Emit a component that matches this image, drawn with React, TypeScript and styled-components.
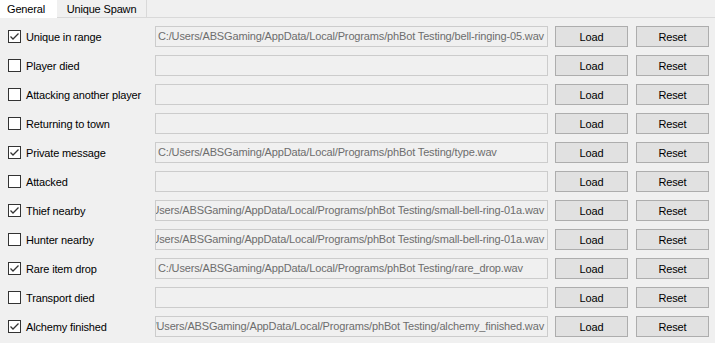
import React from 'react';
import styled, { createGlobalStyle } from 'styled-components';

const GlobalStyle = createGlobalStyle`
  html, body {
    margin: 0;
    padding: 0;
    background: #f0f0f0;
  }
  body {
    font-family: 'Liberation Sans', Arial, sans-serif;
    font-size: 11px;
    letter-spacing: -0.15px;
    color: #000;
  }
`;

const Window = styled.div`
  width: 715px;
  height: 343px;
  background: #f0f0f0;
  overflow: hidden;
`;

const TabBar = styled.div`
  display: flex;
  height: 17px;
  border-bottom: 1px solid #d9d9d9;
`;

const Tab = styled.div<{ $active?: boolean }>`
  display: flex;
  align-items: center;
  box-sizing: border-box;
  justify-content: ${(p) => (p.$active ? 'flex-start' : 'center')};
  width: ${(p) => (p.$active ? '57px' : '90px')};
  padding-left: ${(p) => (p.$active ? '7px' : '0')};
  background: ${(p) => (p.$active ? '#ffffff' : '#f0f0f0')};
  border-right: ${(p) => (p.$active ? 'none' : '1px solid #d9d9d9')};
  height: ${(p) => (p.$active ? '18px' : '17px')};
  margin-bottom: ${(p) => (p.$active ? '-1px' : '0')};
`;

const Panel = styled.div`
  display: grid;
  grid-template-columns: 147px 400px 81px 73px;
  row-gap: 8px;
  padding: 8px 6px 0 8px;
`;

const Row = styled.div`
  display: contents;
`;

const CheckLabel = styled.label`
  display: flex;
  align-items: center;
  gap: 5px;
  height: 21px;
  white-space: nowrap;
`;

const Box = styled.span`
  display: inline-flex;
  align-items: center;
  justify-content: center;
  width: 11px;
  height: 11px;
  border: 1px solid #333333;
  background: #ffffff;
  flex-shrink: 0;
`;

const PathField = styled.div`
  display: flex;
  justify-content: flex-end;
  height: 19px;
  border: 1px solid #cccccc;
  background: #f0f0f0;
  overflow: hidden;
  margin-right: 7px;
`;

const PathText = styled.span`
  flex: 0 0 auto;
  min-width: 100%;
  box-sizing: border-box;
  padding: 0 3px 0 2px;
  line-height: 19px;
  color: #6d6d6d;
  white-space: nowrap;
`;

const Button = styled.button`
  height: 21px;
  width: 73px;
  border: 1px solid #adadad;
  background: #e1e1e1;
  color: #000;
  font: inherit;
  letter-spacing: inherit;
  padding: 0;
`;

type Alert = { label: string; checked: boolean; path: string };

const base = 'C:/Users/ABSGaming/AppData/Local/Programs/phBot Testing/';

const alerts: Alert[] = [
  { label: 'Unique in range', checked: true, path: base + 'bell-ringing-05.wav' },
  { label: 'Player died', checked: false, path: '' },
  { label: 'Attacking another player', checked: false, path: '' },
  { label: 'Returning to town', checked: false, path: '' },
  { label: 'Private message', checked: true, path: base + 'type.wav' },
  { label: 'Attacked', checked: false, path: '' },
  { label: 'Thief nearby', checked: true, path: base + 'small-bell-ring-01a.wav' },
  { label: 'Hunter nearby', checked: false, path: base + 'small-bell-ring-01a.wav' },
  { label: 'Rare item drop', checked: true, path: base + 'rare_drop.wav' },
  { label: 'Transport died', checked: false, path: '' },
  { label: 'Alchemy finished', checked: true, path: base + 'alchemy_finished.wav' },
];

const Check: React.FC<{ checked: boolean }> = ({ checked }) => (
  <Box>
    {checked && (
      <svg width="11" height="11" viewBox="0 0 11 11">
        <path d="M1.5 5.5 L4 8 L9.5 2.5" fill="none" stroke="#333" strokeWidth="1.3" />
      </svg>
    )}
  </Box>
);

const App: React.FC = () => (
  <Window>
    <GlobalStyle />
    <TabBar>
      <Tab $active>General</Tab>
      <Tab>Unique Spawn</Tab>
    </TabBar>
    <Panel>
      {alerts.map((a) => (
        <Row key={a.label}>
          <CheckLabel>
            <Check checked={a.checked} />
            {a.label}
          </CheckLabel>
          <PathField>
            <PathText>{a.path}</PathText>
          </PathField>
          <Button>Load</Button>
          <Button>Reset</Button>
        </Row>
      ))}
    </Panel>
  </Window>
);

export default App;
